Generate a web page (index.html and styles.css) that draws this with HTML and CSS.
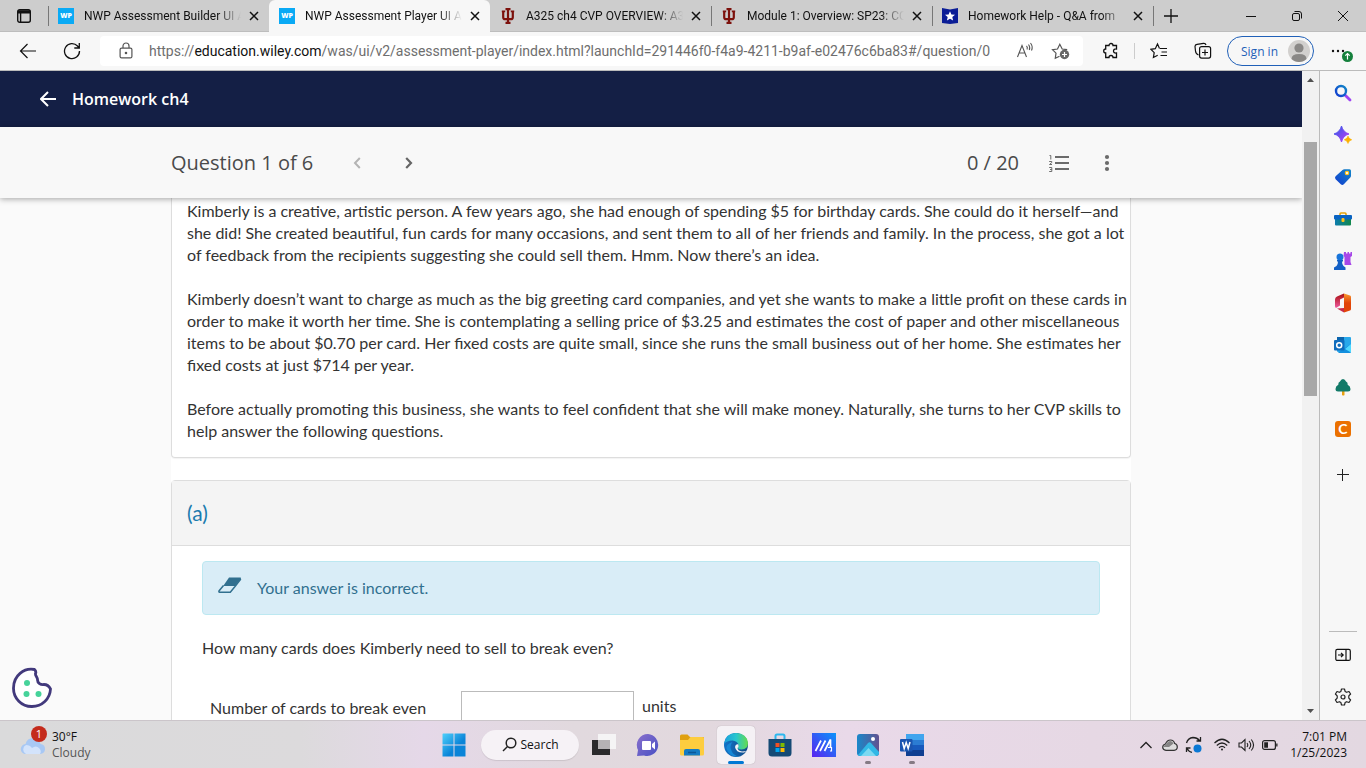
FILE: index.html
```html
<!DOCTYPE html>
<html lang="en">
<head>
    <meta charset="UTF-8">
    <title>NWP Assessment Player UI Application</title>
    <link rel="stylesheet" href="styles.css">
</head>
<body>
    <div id="tabBar">
        <button class="tab-menu" aria-label="Tab actions">
            <svg width="16" height="16" viewBox="0 0 16 16" fill="none" stroke="#111" stroke-width="1.4"><rect x="1.7" y="1.7" width="12.6" height="12.6" rx="2"/><path d="M2 3.2h12M2 4.4h12" stroke-width="2"/><path d="M4.6 5v9"/></svg>
        </button>
        <div class="tab">
            <span class="favicon wp">WP</span>
            <span class="tab-title">NWP Assessment Builder UI A</span>
            <button class="tab-close" aria-label="Close tab"><svg width="10" height="10" viewBox="0 0 10 10"><path d="M1 1l8 8M9 1l-8 8" stroke="#111" stroke-width="1.5"/></svg></button>
        </div>
        <div class="tab active">
            <span class="favicon wp">WP</span>
            <span class="tab-title">NWP Assessment Player UI Ap</span>
            <button class="tab-close" aria-label="Close tab"><svg width="10" height="10" viewBox="0 0 10 10"><path d="M1 1l8 8M9 1l-8 8" stroke="#111" stroke-width="1.5"/></svg></button>
        </div>
        <div class="tab">
            <svg class="favicon" viewBox="0 0 16 16" fill="none" stroke="#7d110c" stroke-width="2.2"><path d="M8 .5v15M5.5 1.2h5M5.5 14.8h5" /><path d="M3.2 3v6.2q0 2 2 2h5.6q2 0 2-2V3"/><path d="M1.8 3.4h3.4M10.800 3.400h3.400" stroke-width="1.6"/></svg>
            <span class="tab-title">A325 ch4 CVP OVERVIEW: A3</span>
            <button class="tab-close" aria-label="Close tab"><svg width="10" height="10" viewBox="0 0 10 10"><path d="M1 1l8 8M9 1l-8 8" stroke="#111" stroke-width="1.5"/></svg></button>
        </div>
        <div class="tab">
            <svg class="favicon" viewBox="0 0 16 16" fill="none" stroke="#7d110c" stroke-width="2.2"><path d="M8 .5v15M5.5 1.2h5M5.5 14.8h5" /><path d="M3.2 3v6.2q0 2 2 2h5.6q2 0 2-2V3"/><path d="M1.8 3.4h3.4M10.800 3.400h3.400" stroke-width="1.6"/></svg>
            <span class="tab-title">Module 1: Overview: SP23: CC</span>
            <button class="tab-close" aria-label="Close tab"><svg width="10" height="10" viewBox="0 0 10 10"><path d="M1 1l8 8M9 1l-8 8" stroke="#111" stroke-width="1.5"/></svg></button>
        </div>
        <div class="tab">
            <svg class="favicon" viewBox="0 0 16 16"><path d="M0 0l8 1.500L16 0v15l-8 1-8-1z" fill="#0b1d96"/><path d="M8 3.200l1.400 3.300 3.600.3-2.700 2.300.8 3.500L8 10.700l-3.100 1.900.8-3.500L3 6.800l3.600-.3z" fill="#fff"/></svg>
            <span class="tab-title">Homework Help - Q&amp;A from</span>
            <button class="tab-close" aria-label="Close tab"><svg width="10" height="10" viewBox="0 0 10 10"><path d="M1 1l8 8M9 1l-8 8" stroke="#111" stroke-width="1.5"/></svg></button>
        </div>
        <button class="new-tab" aria-label="New tab"><svg width="14" height="14" viewBox="0 0 14 14"><path d="M7 0v14M0 7h14" stroke="#111" stroke-width="1.3"/></svg></button>
        <div class="window-buttons">
            <button aria-label="Minimize"><svg width="12" height="12" viewBox="0 0 12 12"><path d="M1 6.500h10" stroke="#111"/></svg></button>
            <button aria-label="Restore"><svg width="12" height="12" viewBox="0 0 12 12" fill="none" stroke="#111"><rect x="1.500" y="3.500" width="7" height="7" rx="1.500"/><path d="M3.500 1.500H8q2.500 0 2.500 2.500v4.500"/></svg></button>
            <button aria-label="Close"><svg width="12" height="12" viewBox="0 0 12 12"><path d="M1 1l10 10M11 1L1 11" stroke="#111"/></svg></button>
        </div>
    </div>

    <div id="toolbar">
        <button class="nav" aria-label="Back"><svg width="18" height="16" viewBox="0 0 18 16" fill="none" stroke="#111" stroke-width="1.2"><path d="M17 8H1.500M8.500 1l-7 7 7 7"/></svg></button>
        <button class="nav" aria-label="Refresh"><svg width="18" height="18" viewBox="0 0 18 18" fill="none" stroke="#111" stroke-width="1.300"><path d="M16.500 9A7.500 7.500 0 1 1 14.500 4L16.200 6M16.300 1v5h-5"/></svg></button>
        <div class="address">
            <svg class="lock" width="14" height="18" viewBox="0 0 14 18" fill="none" stroke="#555" stroke-width="1.200"><rect x="1.100" y="6.100" width="11.800" height="9.800" rx="1.500"/><path d="M4 6V4a3 3 0 0 1 6 0v2"/><circle cx="7" cy="11" r=".7" fill="#555"/></svg>
            <div class="url">https://<b>education.wiley.com</b>/was/ui/v2/assessment-player/index.html?launchId=291446f0-f4a9-4211-b9af-e02476c6ba83#/question/0</div>
            <button aria-label="Read aloud"><svg width="18" height="18" viewBox="0 0 18 18" fill="none" stroke="#555" stroke-width="1.100"><path d="M1.500 15L6 3.500 10.500 15M3 11h6"/><path d="M10.500 4q1.500 1.500.5 3.500M12.500 2.500q2 2.500.8 5.500M14.500 1q2.800 3.500 1 7.500"/></svg></button>
            <button aria-label="Add to favorites"><svg width="20" height="20" viewBox="0 0 20 20" fill="none" stroke="#555" stroke-width="1.200"><path d="M8.500 15.200L4.300 17.300 5 12.200 1.500 8.700l5-.7L8.800 3.300 11.200 8l5 .7"/><circle cx="13.500" cy="13.500" r="4.700" fill="#666" stroke="none"/><path d="M13.500 11v5M11 13.500h5" stroke="#fff"/></svg></button>
        </div>
        <button class="tool" aria-label="Extensions"><svg width="18" height="18" viewBox="0 0 18 18" fill="none" stroke="#111" stroke-width="1.300"><path d="M3.700 3.500H7a2 2 0 1 1 4 0h3.500V7q-3-.3-3 2t3 2v4.500H11a2 2 0 1 0-4 0H3.700V11a2 2 0 1 1 0-4z"/></svg></button>
        <span class="tool-divider"></span>
        <button class="tool favorites" aria-label="Favorites"><svg width="18" height="18" viewBox="0 0 18 18" fill="none" stroke="#111" stroke-width="1.200"><path d="M9.500 6.500L7.500 2 5.300 6.700.8 7.300 4.200 10.600 3.400 15.500l4.300-2.300M10 6.500h7M11.500 10H17M10.500 13.500H17"/></svg></button>
        <button class="tool collections" aria-label="Collections"><svg width="18" height="18" viewBox="0 0 18 18" fill="none" stroke="#111" stroke-width="1.200"><path d="M4.500 13Q1.700 12 1.500 9L1 4.500Q1 2.700 3 2.400l6.500-1q2-.2 2.500 1.600"/><rect x="5.600" y="4.600" width="11" height="11.500" rx="2"/><path d="M11 7.500v6M8 10.500h6"/></svg></button>
        <button class="sign-in">Sign in
            <svg width="22" height="22" viewBox="0 0 22 22"><circle cx="11" cy="11" r="11" fill="#d2d0ce"/><circle cx="11" cy="8" r="4.600" fill="#8a8886"/><path d="M3.500 19q0-5 7.500-5t7.500 5q-3 3-7.500 3t-7.500-3z" fill="#8a8886"/></svg>
        </button>
        <button class="tool more" aria-label="Settings and more, update available"><svg width="24" height="24" viewBox="0 0 24 24"><g fill="#111"><circle cx="3" cy="12" r="1.200"/><circle cx="8" cy="12" r="1.200"/><circle cx="13" cy="12" r="1.200"/></g><circle cx="17.500" cy="17.500" r="5.500" fill="#15803c"/><path d="M17.500 20.500v-6M15.300 16.700l2.200-2.200 2.200 2.200" fill="none" stroke="#fff" stroke-width="1.200"/></svg></button>
    </div>

    <div id="browserBody">
        <div id="page">
            <header class="app-header">
                <a href="#" aria-label="Back to course"><svg width="16" height="16" viewBox="0 0 16 16" fill="none" stroke="#fff" stroke-width="2"><path d="M16 8H1.500M8 1L1 8l7 7"/></svg></a>
                <h1>Homework ch4</h1>
            </header>
            <div class="question-bar">
                <div class="question-bar-inner">
                    <h2>Question 1 of 6</h2>
                    <button class="prev" aria-label="Previous question" disabled><svg width="8" height="12" viewBox="0 0 8 12"><path d="M6.800 1L2 6l4.800 5" fill="none" stroke="#b4b4b4" stroke-width="2"/></svg></button>
                    <button class="next" aria-label="Next question"><svg width="8" height="12" viewBox="0 0 8 12"><path d="M1.200 1L6 6l-4.800 5" fill="none" stroke="#666" stroke-width="2.200"/></svg></button>
                    <span class="points">0 / 20</span>
                    <button aria-label="Question list"><svg width="20" height="18" viewBox="0 0 20 18" fill="none" stroke="#6b6b6b"><path d="M6 3h14M6 9h14M6 15h14" stroke-width="2"/><path d="M.5 1.500h1.300v4M.2 7.500h2.600v1L.5 10.500h2.500M.2 13.500h2.600v4H.2M1 15.500h1.800" stroke-width="1"/></svg></button>
                    <button aria-label="More options"><svg width="6" height="18" viewBox="0 0 6 18" fill="#6b6b6b"><circle cx="3" cy="3" r="2.100"/><circle cx="3" cy="9" r="2.100"/><circle cx="3" cy="15" r="2.100"/></svg></button>
                </div>
            </div>
            <main class="content">
                <div class="story">
                    <p>Kimberly is a creative, artistic person. A few years ago, she had enough of spending $5 for birthday cards. She could do it herself—and<br>
                    she did! She created beautiful, fun cards for many occasions, and sent them to all of her friends and family. In the process, she got a lot<br>
                    of feedback from the recipients suggesting she could sell them. Hmm. Now there’s an idea.</p>
                    <p>Kimberly doesn’t want to charge as much as the big greeting card companies, and yet she wants to make a little profit on these cards in<br>
                    order to make it worth her time. She is contemplating a selling price of $3.25 and estimates the cost of paper and other miscellaneous<br>
                    items to be about $0.70 per card. Her fixed costs are quite small, since she runs the small business out of her home. She estimates her<br>
                    fixed costs at just $714 per year.</p>
                    <p>Before actually promoting this business, she wants to feel confident that she will make money. Naturally, she turns to her CVP skills to<br>
                    help answer the following questions.</p>
                </div>
                <section class="part">
                    <h3>(a)</h3>
                    <div class="part-body">
                        <div class="alert">
                            <svg width="24" height="16" viewBox="0 0 24 16"><path d="M11 .5h11.500q1 .3.300 1.200L17 9H5.200z" fill="#31708f"/><path d="M5.500 8.500L1 14q-.4 1 .6 1.200h10.700L17 9.500l5.800-7.500" fill="none" stroke="#31708f" stroke-width="1.500"/></svg>
                            <span>Your answer is incorrect.</span>
                        </div>
                        <p>How many cards does Kimberly need to sell to break even?</p>
                        <div class="answer-row">
                            <label for="breakEven">Number of cards to break even</label>
                            <input type="text" id="breakEven">
                            <span>units</span>
                        </div>
                    </div>
                </section>
            </main>
            <button class="cookie" aria-label="Cookie preferences">
                <svg width="42" height="42" viewBox="0 0 42 42"><path d="M23.500 2.500C13 .5 2.500 8.500 2.500 21a18.200 18.200 0 0 0 18.500 18.500c10 0 18-7.500 18.500-17.500-1.500-3-4-4.500-6.500-4.500-3.500.5-6.500-1.500-6.500-4.500.5-2.500-2.500-4-2-6.500.5-1 .5-2.500-1-4z" fill="#fff" stroke="#42397c" stroke-width="2.800" stroke-linejoin="round"/><g fill="#46d39a"><circle cx="16" cy="16" r="3"/><circle cx="15.500" cy="27" r="3"/><circle cx="27.500" cy="27" r="3"/></g></svg>
            </button>
        </div>

        <div class="scrollbar">
            <span class="arrow"><svg width="7" height="4" viewBox="0 0 7 4"><path d="M0 4l3.500-4L7 4z" fill="#505050"/></svg></span>
            <div class="track"><div class="thumb"></div></div>
            <span class="arrow"><svg width="7" height="4" viewBox="0 0 7 4"><path d="M0 0l3.500 4L7 0z" fill="#505050"/></svg></span>
        </div>

        <nav id="sidebar">
            <svg width="0" height="0" class="defs">
                <defs>
                    <linearGradient id="blueViolet" x1="0" y1="0" x2="1" y2="1"><stop offset="0" stop-color="#2b5be8"/><stop offset="1" stop-color="#c33cf5"/></linearGradient>
                    <linearGradient id="blueTeal" x1="1" y1="0" x2="0" y2="1"><stop offset="0" stop-color="#1287c8"/><stop offset="1" stop-color="#123bd0"/></linearGradient>
                    <linearGradient id="tealGreen"><stop offset="0" stop-color="#0c7cae"/><stop offset="1" stop-color="#11884c"/></linearGradient>
                    <linearGradient id="office" x1="0" y1="0" x2="0" y2="1"><stop offset="0" stop-color="#a70d0d"/><stop offset="1" stop-color="#ef5aa0"/></linearGradient>
                    <linearGradient id="orange" x1="0" y1="0" x2="0" y2="1"><stop offset="0" stop-color="#fa9a30"/><stop offset=".5" stop-color="#e14508"/></linearGradient>
                </defs>
            </svg>
            <button aria-label="Search"><svg width="18" height="18" viewBox="0 0 18 18" fill="none"><path d="M11 11l5 5" stroke="#a045f2" stroke-width="2.800" stroke-linecap="round"/><circle cx="7" cy="7" r="5" stroke="url(#blueTeal)" stroke-width="2.400"/></svg></button>
            <button aria-label="Discover"><svg width="18" height="18" viewBox="0 0 18 18"><path d="M7.500 0q1.500 6 7.500 8-6 1.500-7.500 8Q6 9.500 0 8 6 6 7.500 0z" fill="url(#blueViolet)" stroke="url(#blueViolet)"/><path d="M14 10q.8 3 3.800 3.800-3 .8-3.800 3.800-.8-3-3.800-3.800 3-.8 3.800-3.800z" fill="#fcb100" stroke="#fcb100" stroke-width=".5"/></svg></button>
            <button aria-label="Shopping"><svg width="18" height="18" viewBox="0 0 18 18"><path d="M8.500 2q.8-.7 2-.7h5q1.500 0 1.500 1.500v5q0 1-.7 1.700l-6.500 6.800q-1.500 1.200-3 0l-5.200-5q-1.200-1.500 0-3z" fill="url(#blueTeal)"/><circle cx="13" cy="5" r="1.700" fill="#fff" stroke="#ffc21a" stroke-width="1.200"/></svg></button>
            <button aria-label="Tools"><svg width="18" height="18" viewBox="0 0 18 18"><path d="M6 6V4q0-1 1-1h4q1 0 1 1v2" fill="none" stroke="#e4a40f" stroke-width="1.600"/><rect x="1" y="7" width="16" height="8.500" rx="1" fill="url(#tealGreen)"/><rect x="0" y="5" width="18" height="4.500" rx="1" fill="#0963c2"/><rect x="7.500" y="8" width="3" height="4" rx="1" fill="#ffc21a"/></svg></button>
            <button aria-label="Games"><svg width="18" height="18" viewBox="0 0 18 18"><path d="M10 0h2v1.500h1.500V0H15v1.500h1.500V0H18v4l-1.500 1v5l1 3h-7V5L9.500 4z" fill="#a747e8"/><circle cx="6" cy="5" r="3.500" fill="#1874da"/><path d="M3 8h6v1.500H8q0 3 1.500 4.500l2 1.500V18H0v-2.500L2.500 14Q4 12.500 4 9.500H3z" fill="#135fc5"/></svg></button>
            <button aria-label="Office"><svg width="18" height="20" viewBox="0 0 18 20"><path d="M10 .5L3 3.500Q1 4.500 1 6.500V13q0 1.500 1 2l4-2.500V6.500l4-2z" fill="url(#office)"/><path d="M10 .5l6 2q1 .4 1 1.500v12q0 1-1 1.500l-6 2V4z" fill="url(#orange)"/><path d="M3 15.500l7-.5v4.500z" fill="#c72b49"/></svg></button>
            <button aria-label="Outlook"><svg width="18" height="18" viewBox="0 0 18 18"><rect x="3" y="1" width="14" height="15" rx="1" fill="#28a8ea"/><path d="M3 1h7v7H3z" fill="#0b64ad"/><path d="M4 16.500L17 8v8q0 1-1 1H5z" fill="#1490df"/><path d="M17 8v8.500L11 13z" fill="#50d9ff"/><rect x="0" y="4" width="10.500" height="10.500" rx="1" fill="#0f6cbd"/><circle cx="5.200" cy="9.200" r="2.500" fill="none" stroke="#fff" stroke-width="1.500"/></svg></button>
            <button aria-label="Drop"><svg width="18" height="18" viewBox="0 0 18 18"><path d="M8 11h2.500v6q-1.200 1-2.500 0z" fill="#e9a010"/><path d="M9 1q2 0 3 2.500 2 1 1.700 3.200Q16.500 8 16.500 11q0 2.500-2.500 2.500H4q-2.500 0-2.500-2.500 0-3 2.800-4.300Q4 4.500 6 3.500 7 1 9 1z" fill="#127a68"/></svg></button>
            <button aria-label="Chegg"><span class="chegg">C</span></button>
            <button class="add" aria-label="Customize"><svg width="12" height="12" viewBox="0 0 12 12"><path d="M5.500 0v12M0 5.500h12" stroke="#222"/></svg></button>
            <span class="side-divider"></span>
            <button aria-label="Hide sidebar"><svg width="16" height="14" viewBox="0 0 16 14" fill="none" stroke="#111" stroke-width="1.200"><rect x=".8" y="1.400" width="14.500" height="11" rx="1.500"/><path d="M11 1.500v11M3 7h5M6 4.800L8.200 7 6 9.200"/></svg></button>
            <button aria-label="Settings"><svg width="18" height="18" viewBox="0 0 18 18" fill="none" stroke="#222" stroke-width="1.200" stroke-linejoin="round"><path d="M7.500 1h3l.6 2.400 1.500.9 2.400-.8L16.600 6l-1.800 1.900v2.200l1.800 1.900-1.600 2.500-2.400-.8-1.500.9-.6 2.400h-3l-.6-2.400-1.500-.9-2.400.8L1.400 12l1.800-1.900V7.900L1.400 6 3 3.500l2.400.8 1.500-.9z"/><circle cx="9" cy="9" r="2"/></svg></button>
        </nav>
    </div>

    <div id="taskbar">
        <button class="weather">
            <span class="weather-icon">
                <svg width="26" height="20" viewBox="0 0 26 20"><path d="M6 19a5 5 0 0 1-.5-10Q7 3 13 3t7.500 6q4.500.5 4.500 5t-5 5z" fill="#a8c8f4"/><path d="M6 19a5 5 0 0 1 0-9q4 0 6 3 4-3 7 0t1 6z" fill="#d3e3fb"/></svg>
                <span class="badge">1</span>
            </span>
            <span class="weather-text">30°F<small>Cloudy</small></span>
        </button>
        <div class="apps">
            <button class="app" aria-label="Start"><svg width="24" height="24" viewBox="0 0 24 24"><defs><linearGradient id="win" x1="0" y1="0" x2="1" y2="1"><stop offset="0" stop-color="#4fd0fb"/><stop offset=".6" stop-color="#0a84d8"/></linearGradient></defs><path d="M1 .5h10.500v11H.5V1zM12.500.5h11v11h-11zM.5 12.500h11v11H.5zM12.500 12.500h11v11h-11z" fill="url(#win)"/></svg></button>
            <button class="search"><svg width="15" height="15" viewBox="0 0 15 15" fill="none" stroke="#222" stroke-width="1.500"><circle cx="9" cy="6" r="4.800"/><path d="M5.500 9.500L1 14"/></svg>Search</button>
            <button class="app" aria-label="Task view"><svg width="24" height="24" viewBox="0 0 24 24"><rect x="0" y="7" width="18" height="15" fill="#2b2a2c"/><rect x="6" y="1" width="18" height="15" fill="#f5f4f5"/><rect x="6" y="7" width="12" height="9" fill="#b5b2b4"/></svg></button>
            <button class="app" aria-label="Chat"><svg width="24" height="24" viewBox="0 0 24 24"><defs><linearGradient id="chat" x1="0" y1="0" x2="1" y2="1"><stop offset="0" stop-color="#8a70cc"/><stop offset="1" stop-color="#4850c4"/></linearGradient></defs><path d="M12 1a11 11 0 1 1-4 21.500L1 23l1-6A11 11 0 0 1 12 1z" fill="url(#chat)"/><rect x="6" y="8" width="9" height="9" rx="1" fill="#fff"/><path d="M16 11l3-2.500v8L16 14z" fill="#fff"/></svg></button>
            <button class="app" aria-label="File Explorer"><svg width="26" height="24" viewBox="0 0 26 24"><path d="M1 3q0-1.500 1.500-1.500h6L11 4h13q1 0 1 1v5H1z" fill="#e0a010"/><path d="M1 7h8L11.500 4h12Q25 4 25 5.500V21q0 1.500-1.500 1.500h-21Q1 22.500 1 21z" fill="#fdcd3f"/><path d="M5 22.500V18q0-2 2-2h12q2 0 2 2v4.500z" fill="#147bc3"/><path d="M9 19.500h8" stroke="#0b5797" stroke-width="1.500"/></svg></button>
            <button class="app open" aria-label="Microsoft Edge"><svg width="26" height="26" viewBox="0 0 26 26"><defs><linearGradient id="edgeTop"><stop offset="0" stop-color="#1c9edc"/><stop offset=".5" stop-color="#27c6cf"/><stop offset="1" stop-color="#65dc4c"/></linearGradient><linearGradient id="edgeLow"><stop offset="0" stop-color="#1273c8"/><stop offset="1" stop-color="#114b87"/></linearGradient></defs><circle cx="13" cy="13" r="12" fill="url(#edgeLow)"/><path d="M1 12Q2.500 1 13 1q11 .5 12 10 0 6-6.500 6.500-4 0-3.500-2.500 1-1 .5-2.500Q14 9 9.500 8.500 3.500 8.500 1 12z" fill="url(#edgeTop)"/><path d="M9.500 10Q6 14 9 20q3 5 9 4-9 2-13-4t2-9z" fill="#1687d6"/><path d="M15.500 12.500q-3-1-3.500 2.500 1 6 9 5.500l3.500-2q-2 1-5.500 1-4-.5-4.500-3.500 1.500-1 1-3.500z" fill="#f5f3f6"/></svg></button>
            <button class="app" aria-label="Microsoft Store"><svg width="24" height="24" viewBox="0 0 24 24"><path d="M7.500 7V3q0-1.500 1.500-1.500h6q1.500 0 1.500 1.500v4" fill="none" stroke="#2cb7ee" stroke-width="2"/><path d="M.5 6h23v14q0 3.500-3.500 3.500H4Q.5 23.500.5 20z" fill="#154a75"/><path d="M7.500 10h4v4h-4z" fill="#f25022"/><path d="M12.500 10h4v4h-4z" fill="#7fba00"/><path d="M7.500 15h4v4h-4z" fill="#00a4ef"/><path d="M12.500 15h4v4h-4z" fill="#ffb900"/></svg></button>
            <button class="app" aria-label="MyAsus"><svg width="24" height="24" viewBox="0 0 24 24"><defs><linearGradient id="asus" x1="0" y1="1" x2="1" y2="0"><stop offset="0" stop-color="#5b22f0"/><stop offset="1" stop-color="#0a94fa"/></linearGradient></defs><path d="M0 0h24v24H0z" fill="url(#asus)"/><path d="M3.500 18L9 7.500M8 18l5.500-10.500M12.500 18L18.500 6.500V14" fill="none" stroke="#fff" stroke-width="1.700"/><path d="M16 14.500h3.500V18H18" fill="none" stroke="#fff" stroke-width="1.200"/></svg></button>
            <button class="app running" aria-label="Photos"><svg width="24" height="24" viewBox="0 0 24 24"><defs><linearGradient id="photos"><stop offset="0" stop-color="#1988ca"/><stop offset="1" stop-color="#625290"/></linearGradient></defs><rect x="1" y="1" width="22" height="22" rx="3" fill="url(#photos)"/><path d="M2 22L12 10q1.500-1.500 3 0l8 9v1q0 3-3 3H4z" fill="#31b8e6"/><path d="M5 23l7.500-8L20 23z" fill="#7cd9f1"/><circle cx="17" cy="6" r="2" fill="#fff"/></svg></button>
            <button class="app running" aria-label="Word"><svg width="26" height="24" viewBox="0 0 26 24"><path d="M7 1h18v6H7z" fill="#41a5ee"/><path d="M7 7h18v5H7z" fill="#2b7cd3"/><path d="M7 12h18v5H7z" fill="#185abd"/><path d="M7 17h18v6H7z" fill="#103f91"/><rect x="1" y="6" width="12.500" height="12.500" rx="1" fill="#1b55b0"/><path d="M3.500 9l1.700 6.500 2-6 2 6L11 9" fill="none" stroke="#fff" stroke-width="1.500"/></svg></button>
        </div>
        <div class="tray">
            <button aria-label="Show hidden icons"><svg width="12" height="8" viewBox="0 0 12 8"><path d="M.5 7L6 1.500 11.500 7" fill="none" stroke="#222" stroke-width="1.300"/></svg></button>
            <button aria-label="OneDrive"><svg width="16" height="12" viewBox="0 0 16 12"><path d="M4 11.300Q.8 11 .7 8.200.9 5.500 3.500 5 5 1 8.500 1q3.200 0 4.200 3.500 2.600.7 2.600 3.500 0 3-3.300 3.300z" fill="#ddd" stroke="#333" stroke-width="1.200"/><path d="M1.500 8Q2 5.500 4 5.500 5.500 2 8.500 2q2 0 3 2.500L7 8z" fill="#858585"/></svg></button>
            <button aria-label="Updates"><svg width="18" height="18" viewBox="0 0 18 18" fill="none" stroke="#222" stroke-width="1.300"><path d="M1.500 7Q3 2 8 1.500q4 0 6.500 3M15.500 1v4h-4M1.500 16v-4h4M2 12.500q2 3.500 5 3.800"/><circle cx="12.500" cy="12.500" r="4" fill="#0a78d4" stroke="none"/></svg></button>
            <button class="wifi" aria-label="Network"><svg width="16" height="13" viewBox="0 0 16 13" fill="none" stroke="#222" stroke-width="1.200"><path d="M.5 5Q8-2.500 15.500 5M2.800 7.500q5.200-5 10.400 0M5 9.800q3-2.800 6 0"/><circle cx="8" cy="11.500" r="1" fill="#222" stroke="none"/></svg></button>
            <button aria-label="Volume"><svg width="17" height="14" viewBox="0 0 17 14" fill="none" stroke="#222" stroke-width="1.100"><path d="M1 5h2.500L7 1.500v11L3.500 9H1zM9 5q1.500 2 0 4M11 3q3.500 4 0 8M13.300 1.500q4.500 5.500 0 11"/></svg></button>
            <button aria-label="Battery"><svg width="16" height="10" viewBox="0 0 16 10"><rect x=".6" y=".6" width="12.800" height="8.800" rx="2" fill="none" stroke="#222" stroke-width="1.200"/><path d="M2.200 2.200H6v5.600H2.200zM14.200 3.500h1.300v3h-1.300z" fill="#222"/></svg></button>
            <div class="clock">7:01 PM<br>1/25/2023</div>
        </div>
    </div>
</body>
</html>
```
FILE: styles.css
```css
* {
    margin: 0;
    padding: 0;
    box-sizing: border-box;
}

body {
    height: 100vh;
    display: flex;
    flex-direction: column;
    font-family: 'Open Sans', 'Noto Sans', sans-serif;
    font-size: 12px;
    color: #111;
    background: #f7f7f7;
    overflow: hidden;
}

button {
    border: none;
    background: none;
    font: inherit;
    color: inherit;
    display: flex;
    align-items: center;
    justify-content: center;
    flex-shrink: 0;
}

svg {
    flex-shrink: 0;
}

/* tabs */
#tabBar {
    height: 32px;
    flex-shrink: 0;
    display: flex;
    background: #cdcdcd;
    box-shadow: inset 0 -1px #bdbdbd;
    font-family: Roboto, sans-serif;
}

.tab-menu {
    width: 48px;
}

.tab {
    flex: 0 1 221px;
    min-width: 0;
    display: flex;
    align-items: center;
    padding: 0 9px 0 10px;
    background: linear-gradient(#777, #777) left center / 1px 20px no-repeat;
}

.tab.active {
    background: #f7f7f7;
    border-radius: 6px 6px 0 0;
}

.tab.active + .tab {
    background: none;
}

.favicon {
    width: 16px;
    height: 16px;
    flex-shrink: 0;
}

.wp {
    background: #0aaaf5;
    color: white;
    font: 800 7px/16px 'Open Sans', sans-serif;
    text-align: center;
}

.tab-title {
    flex: 1;
    min-width: 0;
    margin-left: 10px;
    overflow: hidden;
    white-space: nowrap;
    -webkit-mask-image: linear-gradient(to left, transparent, #000 24px);
    mask-image: linear-gradient(to left, transparent, #000 24px);
}

.tab-close {
    width: 12px;
    height: 16px;
    margin-left: 7px;
}

.new-tab {
    width: 36px;
    background: linear-gradient(#777, #777) left center / 1px 20px no-repeat;
}

.window-buttons {
    display: flex;
    margin-left: auto;
}

.window-buttons button {
    width: 46px;
}

/* address bar */
#toolbar {
    height: 38px;
    flex-shrink: 0;
    display: flex;
    align-items: center;
    padding: 0 8px 0 6px;
    background: #f7f7f7;
}

.nav {
    width: 44px;
    height: 30px;
}

.address {
    flex: 1;
    min-width: 0;
    height: 30px;
    display: flex;
    align-items: center;
    margin-left: 6px;
    padding: 0 4px 0 19px;
    background: white;
    border-radius: 4px;
}

.address button {
    width: 36px;
    height: 28px;
}

.url {
    flex: 1;
    min-width: 0;
    margin-left: 16px;
    overflow: hidden;
    white-space: nowrap;
    font-family: Roboto, sans-serif;
    font-size: 14px;
    color: #6e6e6e;
}

.url b {
    font-weight: normal;
    color: #111;
}

.tool {
    width: 32px;
    height: 30px;
    margin-left: 12px;
}

.tool-divider {
    width: 1px;
    height: 16px;
    margin-left: 7px;
    background: #ccc;
}

.favorites {
    margin-left: 8px;
}

.sign-in {
    width: 87px;
    height: 30px;
    margin-left: 8px;
    gap: 10px;
    border: 1px solid #2060b8;
    border-radius: 15px;
    padding-left: 10px;
    color: #1f5fb8;
}

/* page and sidebar */
#browserBody {
    flex: 1;
    min-height: 0;
    display: flex;
    border-top: 1px solid #bbb;
}

#page {
    flex: 1;
    min-width: 0;
    position: relative;
    display: flex;
    flex-direction: column;
    background: #fafafa;
    overflow: hidden;
}

.app-header {
    height: 56px;
    flex-shrink: 0;
    display: flex;
    align-items: center;
    gap: 16px;
    padding-left: 40px;
    background: #141f45;
    color: white;
}

.app-header a {
    display: flex;
}

.app-header h1 {
    font-size: 16px;
    font-weight: 600;
}

.question-bar {
    height: 71px;
    flex-shrink: 0;
    z-index: 1;
    background: #f8f8f8;
    box-shadow: 0 1px 6px rgba(0,0,0,0.35);
}

.question-bar-inner {
    max-width: 960px;
    height: 100%;
    margin: 0 auto;
    display: flex;
    align-items: center;
    font-size: 20px;
    color: #4a4a4a;
}

.question-bar h2 {
    font-size: 20px;
    font-weight: normal;
}

.question-bar button {
    width: 48px;
    height: 48px;
}

.question-bar .prev {
    margin-left: 20px;
    margin-right: 4px;
}

.points {
    margin-left: auto;
    margin-right: 16px;
}

.content {
    width: 100%;
    max-width: 960px;
    flex: 1;
    min-height: 0;
    margin: 0 auto;
    background: white;
    font-family: Lato, sans-serif;
    font-size: 16px;
    line-height: 22px;
    color: #333;
}

.story {
    padding: 2px 0 15px 15px;
    border: 1px solid #ddd;
    border-top: none;
    border-radius: 0 0 4px 4px;
    box-shadow: 0 1px 1px rgba(0,0,0,0.05);
}

.story p + p {
    margin-top: 22px;
}

.part {
    margin-top: 22px;
    border: 1px solid #ddd;
    border-radius: 4px;
}

.part h3 {
    padding: 21px 15px;
    background: #f4f4f4;
    border-bottom: 1px solid #ddd;
    font-size: 21px;
    font-weight: normal;
    color: #1a7bae;
}

.part-body {
    padding: 15px 30px;
}

.alert {
    display: flex;
    align-items: flex-start;
    gap: 15px;
    padding: 15px;
    margin-bottom: 22px;
    background: #d9edf7;
    border: 1px solid #bce8f1;
    border-radius: 4px;
    color: #31708f;
}

.answer-row {
    display: grid;
    grid-template-columns: 251px 173px auto;
    margin-top: 32px;
    padding-left: 8px;
    line-height: 34px;
}

.answer-row input {
    height: 34px;
    padding: 6px 12px;
    border: 1px solid #bbb;
    font: inherit;
}

.answer-row span {
    padding-left: 8px;
    line-height: 30px;
}

.cookie {
    position: absolute;
    left: 11px;
    bottom: 11px;
}

.scrollbar {
    width: 17px;
    display: flex;
    flex-direction: column;
    background: #f1f1f1;
}

.arrow {
    height: 18px;
    display: flex;
    align-items: center;
    justify-content: center;
}

.track {
    flex: 1;
}

.thumb {
    width: 13px;
    height: 254px;
    margin: 53px auto 0;
    background: #a8a8a8;
}

#sidebar {
    width: 47px;
    display: flex;
    flex-direction: column;
    align-items: center;
    padding: 1px 0 2px;
    border-left: 1px solid #bbb;
    background: #f7f7f7;
}

#sidebar button {
    width: 42px;
    height: 42px;
}

.defs {
    position: absolute;
}

.chegg {
    width: 16px;
    height: 16px;
    border-radius: 3px;
    background: #eb7100;
    color: white;
    font: bold 14px/16px Lato, sans-serif;
}

#sidebar .add {
    margin-top: 4px;
}

.side-divider {
    width: 28px;
    height: 1px;
    margin: auto 0 2px;
    background: #bbb;
}

/* taskbar */
#taskbar {
    height: 48px;
    flex-shrink: 0;
    z-index: 2;
    display: grid;
    grid-template-columns: 1fr auto 1fr;
    border-top: 1px solid #cbc5ca;
    background: linear-gradient(90deg, #dadadb 0, #dcdadc 22%, #e5d8e8 31%, #e1d9de 42%, #e2d8de 52%, #e9d9e9 62%, #e6d8e4 80%, #e3d8e1 100%);
}

.weather {
    justify-self: start;
    gap: 6px;
    padding-left: 20px;
    text-align: left;
    line-height: 16px;
}

.weather-icon {
    position: relative;
    width: 26px;
    height: 20px;
}

.badge {
    position: absolute;
    top: -9px;
    right: -1px;
    width: 16px;
    height: 16px;
    border-radius: 8px;
    background: #c42b1c;
    color: white;
    font-size: 11px;
    text-align: center;
}

.weather small {
    display: block;
    font-size: 12px;
    color: #555;
}

.apps {
    display: flex;
    align-items: center;
}

.app {
    position: relative;
    width: 44px;
    height: 38px;
}

.search {
    width: 98px;
    height: 30px;
    margin: 0 3px 0 5px;
    gap: 4px;
    border-radius: 15px;
    background: #f6f2f6;
    box-shadow: 0 1px 1px rgba(0,0,0,0.1);
}

.app.open {
    width: 38px;
    margin: 0 3px;
    border-radius: 4px;
    background: #f5f1f5;
    box-shadow: 0 0 1px rgba(0,0,0,0.3);
}

.app.open::after,
.app.running::after {
    content: '';
    position: absolute;
    bottom: 0;
    width: 6px;
    height: 3px;
    border-radius: 2px;
    background: #857a84;
}

.app.open::after {
    width: 16px;
    background: #0078d4;
}

.tray {
    display: flex;
    align-items: center;
    justify-content: flex-end;
    padding-right: 19px;
}

.tray button {
    width: 24px;
    height: 38px;
}

.tray .wifi {
    margin-left: 4px;
}

.clock {
    min-width: 65px;
    text-align: right;
    line-height: 16px;
}
```
